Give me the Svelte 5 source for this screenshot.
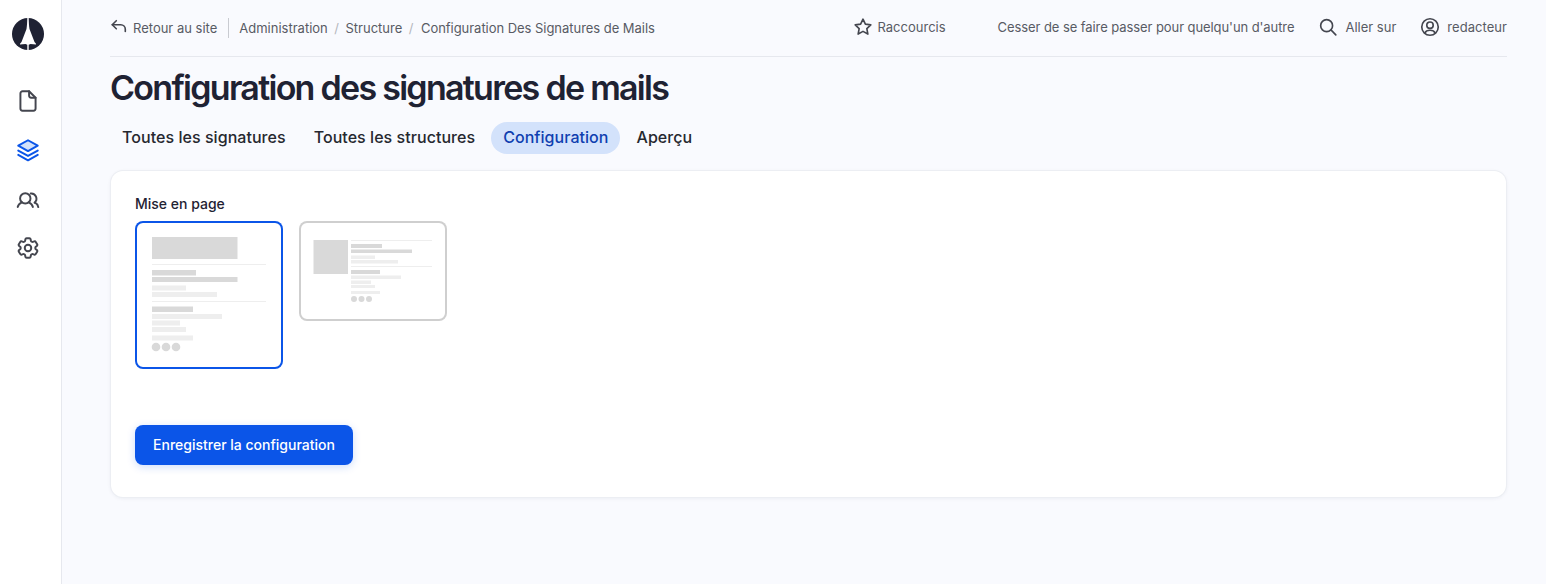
<script>
  const crumbs = ['Administration', 'Structure', 'Configuration Des Signatures de Mails'];
  const tabs = ['Toutes les signatures', 'Toutes les structures', 'Configuration', 'Aperçu'];

  // [x, y, width, height, shade] of each block of the layout previews
  const stacked = [
    [17, 16, 85.5, 22, 'd'],
    [17, 43, 114, 1, 'l'],
    [17, 49, 44, 5.5, 'd'],
    [17, 56, 85.5, 5, 'd'],
    [17, 64.5, 34, 5, 'l'],
    [17, 71, 65, 5, 'l'],
    [17, 80, 114, 1, 'l'],
    [17, 85.5, 41, 5.5, 'd'],
    [17, 93, 70, 5, 'l'],
    [17, 99.5, 28, 5, 'l'],
    [17, 106, 34, 5, 'l'],
    [17, 114.5, 41, 5, 'l']
  ];
  const inline = [
    [14.5, 19, 34.5, 34, 'd'],
    [52, 19, 81, 1, 'l'],
    [52, 23, 31, 4, 'd'],
    [52, 28.5, 61, 3.5, 'd'],
    [52, 34.5, 24, 3.5, 'l'],
    [52, 39, 47, 3.5, 'l'],
    [52, 45, 81, 1, 'l'],
    [52, 49, 29, 4, 'd'],
    [52, 54.5, 50, 3.5, 'l'],
    [52, 59.5, 20, 3.5, 'l'],
    [52, 64, 24, 3, 'l'],
    [52, 70, 29, 3, 'l']
  ];
</script>

<div class="layout">
  <nav class="sidebar">
    <svg class="logo" viewBox="0 0 32 32" width="32" height="32">
      <circle cx="16" cy="16" r="16" fill="#1f2233" />
      <path d="M15.300 0h1.400c.1 4 .3 8 .8 11l5 13 1.500 1.800v.6l-5.500-.4-1.800.8v5.200h-1.400v-5.200l-1.800-.8-5.500.4v-.6l1.500-1.800 5-13c.5-3 .7-7 .8-11z" fill="#fff" />
    </svg>
    <div class="nav-icons">
      <svg viewBox="0 0 24 24" width="26" height="26" class="ic">
        <path d="M13 3H7a2 2 0 0 0-2 2v14a2 2 0 0 0 2 2h10a2 2 0 0 0 2-2V9z" />
        <path d="M13 3v4a2 2 0 0 0 2 2h4" />
      </svg>
      <svg viewBox="0 0 24 24" width="26" height="26" class="ic active">
        <path d="M12 3 3 8l9 5 9-5z" fill="#d3e2fb" />
        <path d="m3 12.500 9 5 9-5" />
        <path d="m3 16.500 9 5 9-5" />
      </svg>
      <svg viewBox="0 0 24 24" width="26" height="26" class="ic users">
        <circle cx="9.500" cy="10.500" r="4.800" />
        <path d="M2.500 18.500c.4-2.200 1.900-3.500 3.800-4.300" />
        <path d="M16.500 18.500c-.4-2.200-1.900-3.500-3.800-4.300" />
        <path d="M14.500 6a4.800 4.800 0 0 1 3.500 8.500" />
        <path d="M18.500 14.500c1.500.8 2.700 2 3 4" />
      </svg>
      <svg viewBox="0 0 24 24" width="26" height="26" class="ic">
        <path d="M9.594 3.94c.09-.542.56-.94 1.11-.94h2.593c.55 0 1.02.398 1.11.94l.213 1.281c.063.374.313.686.645.87.074.04.147.083.22.127.325.196.72.257 1.075.124l1.217-.456a1.125 1.125 0 0 1 1.37.49l1.296 2.247a1.125 1.125 0 0 1-.26 1.431l-1.003.827c-.293.241-.438.613-.43.992a7.723 7.723 0 0 1 0 .255c-.008.378.137.75.43.991l1.004.827c.424.35.534.955.26 1.43l-1.298 2.247a1.125 1.125 0 0 1-1.369.491l-1.217-.456c-.355-.133-.75-.072-1.076.124a6.47 6.47 0 0 1-.22.128c-.331.183-.581.495-.644.869l-.213 1.281c-.09.543-.56.94-1.11.94h-2.594c-.55 0-1.019-.398-1.11-.94l-.213-1.281c-.062-.374-.312-.686-.644-.87a6.52 6.52 0 0 1-.22-.127c-.325-.196-.72-.257-1.076-.124l-1.217.456a1.125 1.125 0 0 1-1.369-.49l-1.297-2.247a1.125 1.125 0 0 1 .26-1.431l1.004-.827c.292-.24.437-.613.43-.991a6.932 6.932 0 0 1 0-.255c.007-.38-.138-.751-.43-.992l-1.004-.827a1.125 1.125 0 0 1-.26-1.43l1.297-2.247a1.125 1.125 0 0 1 1.37-.491l1.216.456c.356.133.751.072 1.076-.124.072-.044.146-.086.22-.128.332-.183.582-.495.644-.869l.214-1.28Z" />
        <circle cx="12" cy="12" r="3" />
      </svg>
    </div>
  </nav>

  <main class="content">
    <header class="topbar">
      <div class="left">
        <a class="back">
          <svg viewBox="0 0 20 20" width="18" height="18" class="mini arrow">
            <path d="M7 3 2.500 7.500 7 12" />
            <path d="M2.500 7.500H12a5 5 0 0 1 5 5V15" />
          </svg>
          Retour au site
        </a>
        <span class="divider"></span>
        {#each crumbs as crumb, i}
          {#if i > 0}<span class="sep">/</span>{/if}
          <a class="crumb" class:long={i === 2}>{crumb}</a>
        {/each}
      </div>
      <div class="right">
        <a class="tool star">
          <svg viewBox="0 0 24 24" width="22" height="22" class="mini">
            <path d="m12 3.500 2.600 5.400 5.900.8-4.300 4.100 1.100 5.900-5.300-2.900-5.300 2.900 1.100-5.900-4.300-4.100 5.900-.8z" />
          </svg>
          Raccourcis
        </a>
        <a class="tool stop">Cesser de se faire passer pour quelqu'un d'autre</a>
        <a class="tool go">
          <svg viewBox="0 0 24 24" width="22" height="22" class="mini">
            <circle cx="10.500" cy="10.500" r="6.500" />
            <path d="m15.500 15.500 5 5" />
          </svg>
          Aller sur
        </a>
        <a class="tool user">
          <svg viewBox="0 0 24 24" width="22" height="22" class="mini">
            <circle cx="12" cy="12" r="9" />
            <circle cx="12" cy="10" r="3.500" />
            <path d="M6.500 18.500c.8-2 3-3 5.500-3s4.700 1 5.500 3" />
          </svg>
          redacteur
        </a>
      </div>
    </header>

    <h1>Configuration des signatures de mails</h1>

    <div class="tabs">
      {#each tabs as tab}
        <a class="tab" class:selected={tab === 'Configuration'}>{tab}</a>
      {/each}
    </div>

    <section class="card">
      <p class="label">Mise en page</p>
      <div class="choices">
        <div class="choice picked">
          <svg viewBox="0 0 148 148" width="148" height="148">
            {#each stacked as [x, y, w, h, shade]}
              <rect {x} {y} width={w} height={h} fill={shade === 'd' ? '#d9d9d9' : '#eeeeee'} />
            {/each}
            <circle cx="21" cy="126" r="4.300" fill="#d9d9d9" />
            <circle cx="31" cy="126" r="4.300" fill="#d9d9d9" />
            <circle cx="41" cy="126" r="4.300" fill="#d9d9d9" />
          </svg>
        </div>
        <div class="choice">
          <svg viewBox="0 0 148 100" width="148" height="100">
            {#each inline as [x, y, w, h, shade]}
              <rect {x} {y} width={w} height={h} fill={shade === 'd' ? '#d9d9d9' : '#eeeeee'} />
            {/each}
            <circle cx="55" cy="78" r="3" fill="#d9d9d9" />
            <circle cx="62.500" cy="78" r="3" fill="#d9d9d9" />
            <circle cx="70" cy="78" r="3" fill="#d9d9d9" />
          </svg>
        </div>
      </div>
      <button class="save">Enregistrer la configuration</button>
    </section>
  </main>
</div>

<style>
  :global(body) {
    margin: 0;
    background: #f9fafe;
    font-family: Inter, "Liberation Sans", sans-serif;
    color: #1f2233;
  }

  .layout {
    display: flex;
    min-height: 584px;
  }

  .sidebar {
    width: 61px;
    flex: none;
    background: #fff;
    border-right: 1px solid #e6e8ee;
    display: flex;
    flex-direction: column;
    align-items: center;
    padding-top: 18px;
  }

  .logo {
    margin-left: -5px;
  }

  .nav-icons {
    display: flex;
    flex-direction: column;
    align-items: center;
    gap: 23px;
    margin-top: 38px;
    margin-left: -5px;
  }

  .ic {
    fill: none;
    stroke: #44464f;
    stroke-width: 1.8;
    stroke-linecap: round;
    stroke-linejoin: round;
    display: block;
  }

  .ic.active {
    stroke: #0b55e8;
  }

  .ic.users {
    position: relative;
    top: 1px;
  }

  .content {
    flex: 1;
    min-width: 0;
    padding: 0 39px 0 48px;
  }

  .topbar {
    height: 56px;
    border-bottom: 1px solid #e6e8ee;
    display: flex;
    justify-content: space-between;
    align-items: center;
    font-size: 13px;
    color: #585b64;
  }

  .left,
  .right {
    display: flex;
    align-items: center;
  }

  .right {
    padding-bottom: 2px;
  }

  .mini {
    fill: none;
    stroke: #44464f;
    stroke-width: 1.8;
    stroke-linecap: round;
    stroke-linejoin: round;
    flex: none;
  }

  .back {
    display: flex;
    align-items: center;
    gap: 5px;
  }

  .arrow {
    margin-top: -2px;
  }

  .divider {
    width: 1px;
    height: 20px;
    background: #c9cbd1;
    margin: 0 10px 0 11px;
  }

  .sep {
    color: #b5b7bd;
    margin: 0 6.5px;
  }

  .long {
    margin-left: 1px;
    letter-spacing: -0.04px;
  }

  .tool {
    display: flex;
    align-items: center;
    gap: 6px;
  }

  .star {
    gap: 4px;
    margin-right: 52px;
  }

  .stop {
    margin-right: 23px;
    letter-spacing: -0.08px;
  }

  .go {
    margin-right: 23px;
  }

  .user {
    letter-spacing: 0.05px;
  }

  h1 {
    margin: 13px 0 0;
    font-size: 34px;
    line-height: 36px;
    font-weight: 600;
    letter-spacing: -1.72px;
    color: #1f2233;
  }

  .tabs {
    display: flex;
    gap: 4px;
    margin-top: 16px;
  }

  .tab {
    height: 32px;
    line-height: 30px;
    padding: 0 12px;
    border-radius: 16px;
    font-size: 16px;
    font-weight: 500;
    letter-spacing: 0.05px;
    color: #26282f;
  }

  .tab.selected {
    background: #d3e2fb;
    color: #0f3fb0;
    padding-right: 11.5px;
    margin-right: 0.5px;
  }

  .card {
    margin: 17px 1px 0;
    background: #fff;
    border-radius: 12px;
    box-shadow: 0 0 0 1px #eceef3, 0 1px 4px rgba(30, 40, 80, 0.08);
    padding: 24px;
    height: 326px;
    box-sizing: border-box;
  }

  .label {
    margin: 0;
    font-size: 14px;
    line-height: 18px;
    font-weight: 500;
    color: #1f2233;
    padding-bottom: 8px;
  }

  .choices {
    display: flex;
    align-items: flex-start;
    gap: 16px;
    height: 148px;
  }

  .choice {
    border-radius: 8px;
    line-height: 0;
    box-shadow: inset 0 0 0 2px #cfcfcf;
  }

  .choice.picked {
    box-shadow: inset 0 0 0 2px #0b55e8;
  }

  .save {
    display: block;
    margin-top: 56px;
    height: 40px;
    width: 218px;
    padding: 0 0 2px;
    border: none;
    border-radius: 8px;
    background: #0b55e8;
    color: #fff;
    font-family: inherit;
    font-size: 14px;
    font-weight: 500;
    box-shadow: 0 2px 8px rgba(11, 85, 232, 0.2);
  }
</style>
